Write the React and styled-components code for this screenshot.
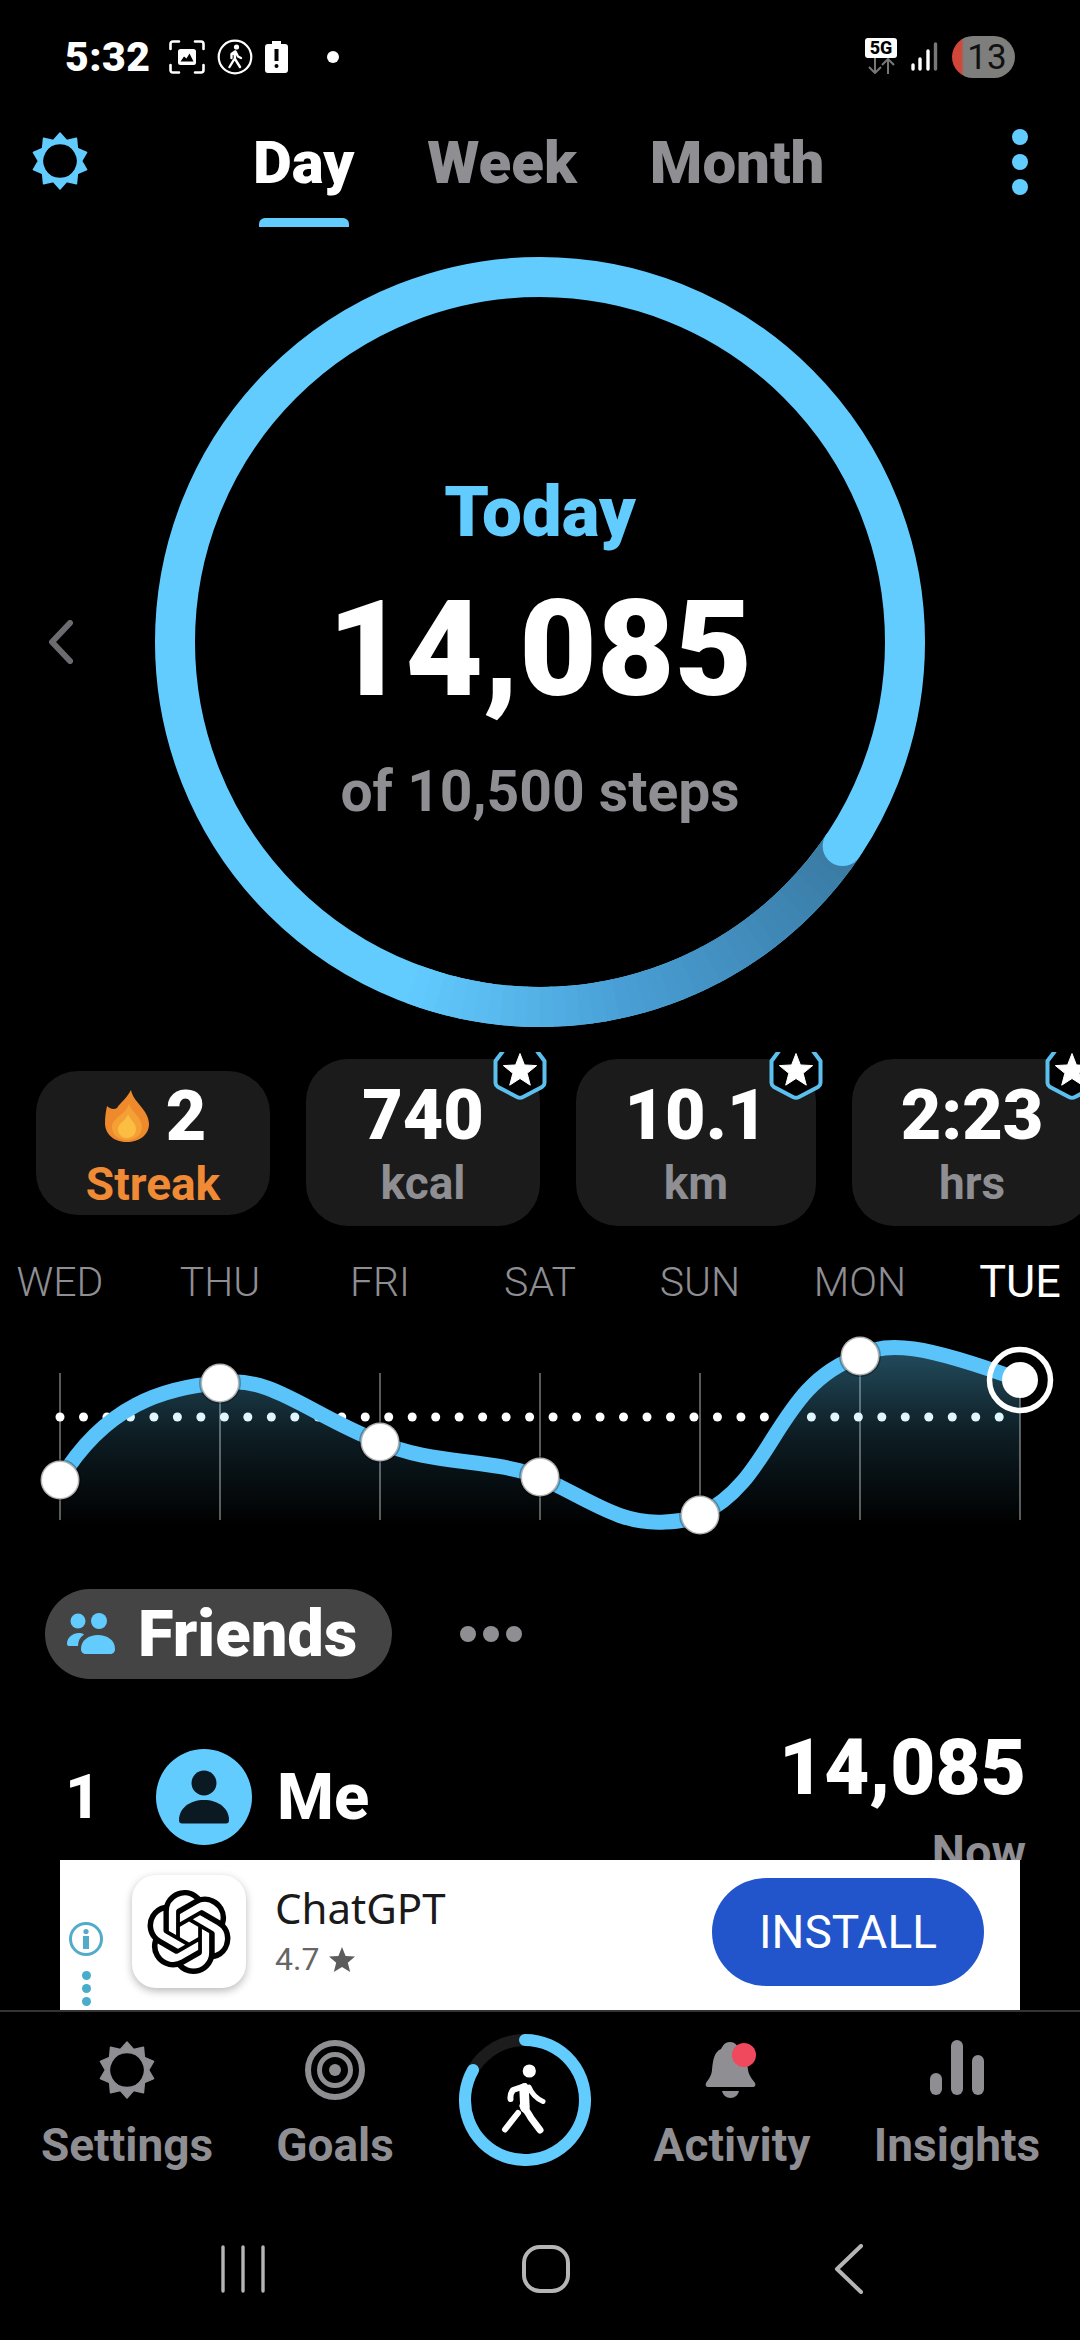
import React from "react";
import styled, { createGlobalStyle } from "styled-components";
import { SiOpenai } from "react-icons/si";

const BLUE = "#63ccff";
const GRAY = "#8e8e93";

const Global = createGlobalStyle`
  html, body { margin: 0; padding: 0; background: #000; }
  body { font-family: Roboto, "Liberation Sans", sans-serif; }
  * { box-sizing: border-box; }
  svg { display: block; }
`;

const Page = styled.div`
  width: 1080px; height: 2340px; background: #000; color: #fff;
  display: flex; flex-direction: column; overflow: hidden;
`;

/* ---- status bar ---- */
const StatusBar = styled.div`
  height: 114px; flex: none; display: flex; align-items: center;
  padding: 0 65px 0 65px;
`;
const Time = styled.div`font-size: 41px; font-weight: 900; width: 104px; letter-spacing: 0.5px;`;
const StatusLeft = styled.div`display: flex; align-items: center; gap: 12px;`;
const StatusDot = styled.div`width: 12px; height: 12px; border-radius: 50%; background: #fff; margin-left: 27px;`;
const StatusRight = styled.div`margin-left: auto; display: flex; align-items: center; gap: 13px;`;
const NetBlock = styled.div`display: flex; flex-direction: column; align-items: center; width: 32px; margin-top: -2px;`;
const FiveG = styled.div`
  width: 32px; height: 20px; background: #fff; color: #000; border-radius: 3px;
  font-size: 18px; font-weight: 800; line-height: 20px; text-align: center;
`;
const BatteryPill = styled.div`
  width: 63px; height: 42px; border-radius: 21px; color: #111; font-size: 35px; font-weight: 400;
  background: linear-gradient(90deg, #d0473a 0, #d0473a 9px, #7e7f7c 12px);
  display: flex; align-items: center; justify-content: center; padding-left: 7px; margin-left: 1px;
`;

/* ---- header ---- */
const Header = styled.div`
  height: 114px; flex: none; display: flex; align-items: flex-start;
  padding-left: 31px;
`;
const GearSlot = styled.div`width: 58px; margin-top: 17px;`;
const Tabs = styled.div`display: flex; margin-left: 164px; gap: 73px;`;
const Tab = styled.div`
  display: flex; flex-direction: column; align-items: center;
  font-size: 60px; font-weight: 900; line-height: 70px; color: ${p => (p.$active ? "#fff" : GRAY)};
  height: 114px; padding-top: 14px;
`;
const TabBar = styled.div`
  width: 90px; height: 9px; border-radius: 6px 6px 0 0; margin-top: 20px;
  background: ${p => (p.$active ? BLUE : "transparent")};
`;
const KebabSlot = styled.div`margin-left: auto; margin-right: 52px; margin-top: 15px; display: flex; flex-direction: column; gap: 9px;`;
const KebabDot = styled.div`width: 16px; height: 16px; border-radius: 50%; background: ${BLUE};`;

/* ---- ring ---- */
const RingRow = styled.div`display: flex; align-items: center; margin-top: 29px; flex: none;`;
const ChevronSlot = styled.div`width: 155px; padding-left: 47px; flex: none;`;
const RingStack = styled.div`display: grid; width: 770px; height: 770px; flex: none;`;
const RingLayer = styled.div`grid-area: 1 / 1;`;
const RingText = styled.div`
  grid-area: 1 / 1; display: flex; flex-direction: column; align-items: center; padding-top: 210px;
`;
const Today = styled.div`font-size: 71px; line-height: 90px; font-weight: 900; color: ${BLUE};`;
const BigCount = styled.div`font-size: 134px; line-height: 150px; font-weight: 900; margin-top: 18px;`;
const Goal = styled.div`font-size: 57px; line-height: 70px; font-weight: 700; color: ${GRAY}; margin-top: 32px;`;

/* ---- stats ---- */
const Stats = styled.div`
  display: flex; align-items: center; gap: 36px; margin-top: 32px; padding-left: 36px; width: 1200px; flex: none;
`;
const StatCard = styled.div`
  position: relative; flex: none; width: ${p => p.$w}px;
  background: #1b1b1b; border-radius: 42px; text-align: center;
  padding: ${p => (p.$streak ? "5px 0 3px" : "16px 0 15px")};
`;
const StatValue = styled.div`
  font-size: 70px; line-height: 80px; font-weight: 900;
  display: flex; align-items: center; justify-content: center; gap: 17px;
  padding-left: ${p => (p.$pad ? 5 : 0)}px;
`;
const StatLabel = styled.div`
  font-size: 46px; line-height: 56px; font-weight: 700; color: ${p => (p.$orange ? "#f08a35" : GRAY)};
`;
const BadgeSlot = styled.div`position: absolute; top: -7px; right: -7px;`;

/* ---- days and chart ---- */
const Days = styled.div`
  display: grid; grid-template-columns: repeat(7, 160px); margin: 32px 0 0 -20px; width: 1120px;
  align-items: end; height: 48px; flex: none;
`;
const Day = styled.div`
  text-align: center; font-size: ${p => (p.$on ? 45 : 41)}px; font-weight: ${p => (p.$on ? 400 : 300)};
  line-height: 48px; color: ${p => (p.$on ? "#fff" : GRAY)};
`;
const ChartWrap = styled.div`margin-top: 4px; height: 230px; flex: none;`;

/* ---- friends ---- */
const FriendsBar = styled.div`display: flex; align-items: center; margin: 49px 0 0 45px; flex: none;`;
const FriendsPill = styled.div`
  width: 347px; height: 90px; border-radius: 45px; background: #444;
  display: flex; align-items: center; padding-left: 22px; gap: 23px;
  font-size: 65px; font-weight: 900;
`;
const MoreDots = styled.div`display: flex; gap: 7px; margin-left: 68px;`;
const MoreDot = styled.div`width: 16px; height: 16px; border-radius: 50%; background: ${GRAY};`;
const FriendClip = styled.div`height: 181px; overflow: hidden; padding: 70px 54px 0 65px; flex: none;`;
const FriendRow = styled.div`display: flex; align-items: flex-start;`;
const Rank = styled.div`width: 91px; font-size: 62px; line-height: 96px; font-weight: 800;`;
const Avatar = styled.div`
  width: 96px; height: 96px; border-radius: 50%; background: ${BLUE}; flex: none;
  display: flex; align-items: center; justify-content: center;
`;
const FriendName = styled.div`font-size: 65px; line-height: 96px; font-weight: 800; margin-left: 25px;`;
const FriendRight = styled.div`margin-left: auto; margin-top: -26px; text-align: right;`;
const FriendSteps = styled.div`font-size: 78px; line-height: 90px; font-weight: 900;`;
const FriendWhen = styled.div`font-size: 47px; line-height: 60px; font-weight: 700; color: ${GRAY}; margin-top: 9px;`;

/* ---- ad ---- */
const Ad = styled.div`
  height: 150px; margin: 0 60px; background: #fff; flex: none; display: flex; padding-top: 15px; color: #222;
`;
const AdInfo = styled.div`width: 72px; flex: none; display: flex; flex-direction: column; align-items: center; padding: 46px 20px 0 0;`;
const AdDots = styled.div`display: flex; flex-direction: column; gap: 4px; margin-top: 14px;`;
const AdDot = styled.div`width: 9px; height: 9px; border-radius: 50%; background: #4aaccb;`;
const AppIcon = styled.div`
  width: 114px; height: 113px; border-radius: 24px; background: #fff; flex: none;
  box-shadow: 0 3px 8px rgba(0,0,0,.28); display: flex; align-items: center; justify-content: center; color: #000;
`;
const AdText = styled.div`margin-left: 29px; display: flex; flex-direction: column; padding-top: 8px;`;
const AdTitle = styled.div`font-family: "Noto Sans", Roboto, sans-serif; font-size: 42px; line-height: 50px; color: #1a1a1a;`;
const AdRating = styled.div`display: flex; align-items: center; gap: 9px; font-size: 32px; line-height: 44px; color: #666; margin-top: 4px;`;
const InstallBtn = styled.div`
  margin: 3px 36px 0 auto; width: 272px; height: 108px; border-radius: 54px; background: #2255cc;
  color: #fff; font-size: 46px; display: flex; align-items: center; justify-content: center;
`;

/* ---- bottom nav ---- */
const Divider = styled.div`height: 2px; background: #333; flex: none;`;
const BottomNav = styled.div`
  display: grid; grid-template-columns: 254px 162px 218px 196px 254px; width: 1084px; height: 178px; flex: none; padding-top: 28px;
`;
const NavItem = styled.div`display: flex; flex-direction: column; align-items: center;`;
const NavIcon = styled.div`height: 60px; display: flex; align-items: center; justify-content: center;`;
const NavLabel = styled.div`font-size: 46px; font-weight: 700; line-height: 52px; margin-top: 19px; color: ${GRAY}; white-space: nowrap;`;
const NavCenter = styled.div`display: flex; justify-content: center; margin-top: -6px;`;

/* ---- system nav ---- */
const SystemNav = styled.div`
  flex: none; display: flex; justify-content: center; align-items: center; gap: 256px; padding: 54px 0 0 12px;
`;

/* ---- drawings ---- */
const starPoints = (cx, cy, spikes, ro, ri) => {
  const pts = [];
  for (let i = 0; i < spikes * 2; i++) {
    const a = (i * Math.PI) / spikes - Math.PI / 2;
    const r = i % 2 === 0 ? ro : ri;
    pts.push(`${(cx + r * Math.cos(a)).toFixed(2)} ${(cy + r * Math.sin(a)).toFixed(2)}`);
  }
  return "M" + pts.join("L") + "Z";
};

const Gear = ({ color }) => (
  <svg width="58" height="60" viewBox="0 0 58 60">
    <path
      d={starPoints(29, 30, 10, 28, 21.5) + " M29 12.5a17.5 17.5 0 1 0 .01 0Z"}
      fill={color} fillRule="evenodd" stroke={color} strokeWidth="1.5" strokeLinejoin="round"
    />
  </svg>
);

const Walker = ({ width, height, color = "#fff" }) => (
  <svg width={width} height={height} viewBox="58 40 50 76" fill="none" stroke={color} strokeLinecap="round" strokeLinejoin="round">
    <circle cx="88.3" cy="49" r="6.6" fill={color} stroke="none" />
    <path d="M84 64 L72 68 Q69 72 69.5 77" strokeWidth="6" />
    <path d="M88 65 Q92 75 102 79.5" strokeWidth="5" />
    <path d="M83 66 L84 86" strokeWidth="9.5" />
    <path d="M82 84 Q88 92 90 96 L99 108" strokeWidth="7" />
    <path d="M77 91 L64 107.5" strokeWidth="6" />
  </svg>
);

const lerp = (a, b, t) => a.map((v, i) => Math.round(v + (b[i] - v) * t));
const tailColor = deg => {
  const c1 = [58, 122, 163], c2 = [72, 158, 212], c3 = [99, 204, 255];
  if (deg < 75) return lerp(c1, c2, (deg - 34) / 41);
  return lerp(c2, c3, Math.min(1, (deg - 75) / 35));
};

const MainRing = () => {
  const r = 365, c = 385;
  const pt = d => [c + r * Math.cos((d * Math.PI) / 180), c + r * Math.sin((d * Math.PI) / 180)];
  const segs = [];
  for (let d = 34; d < 110; d += 2) {
    const [x1, y1] = pt(d);
    const [x2, y2] = pt(d + 2.3);
    const col = tailColor(d);
    segs.push(<path key={d} d={`M${x1} ${y1}A${r} ${r} 0 0 1 ${x2} ${y2}`} stroke={`rgb(${col.join(",")})`} strokeWidth="40" fill="none" />);
  }
  const [hx, hy] = pt(34);
  return (
    <svg width="770" height="770" viewBox="0 0 770 770">
      <circle cx={c} cy={c} r={r} fill="none" stroke={BLUE} strokeWidth="40" />
      {segs}
      <circle cx={hx} cy={hy} r="20" fill={BLUE} />
    </svg>
  );
};

const Chevron = () => (
  <svg width="26" height="44" viewBox="0 0 26 44" fill="none">
    <path d="M23 3 L5 22 L23 41" stroke="#6b6b70" strokeWidth="6" strokeLinecap="round" strokeLinejoin="round" />
  </svg>
);

const Flame = () => (
  <svg width="44" height="52" viewBox="0 0 44 52">
    <path d="M26 0C28 12 44 20 44 34C44 45 34 52 22 52C10 52 0 45 0 33C0 26 1 21 2 16C5 19 9 20 12 18C15 13 22 8 26 0Z" fill="#ee8a2c" />
    <path d="M24 14C27 23 37 27 37 37C37 45 30 50 22 50C14 50 7 45 7 37C7 28 20 25 24 14Z" fill="#f4a034" />
    <path d="M23 24C25 30 31 33 31 39C31 44 27 48 22 48C17 48 13 44 13 39C13 33 21 31 23 24Z" fill="#fbbe42" />
  </svg>
);

const StarBadge = () => (
  <svg width="54" height="48" viewBox="0 0 54 48">
    <path d="M10 -1 L2.5 9 V31 Q2.5 33 5 35 L24 45 Q27 46.5 30 45 L49 35 Q51.5 33 51.5 31 V9 L44 -1" fill="#000" stroke="#5cc0ee" strokeWidth="4" strokeLinejoin="round" />
    <path d={starPoints(27, 19, 5, 17.5, 7.5)} fill="#fff" stroke="#fff" strokeWidth="1" strokeLinejoin="round" />
  </svg>
);

const Chart = () => {
  const xs = [60, 220, 380, 540, 700, 860, 1020];
  const ys = [1480, 1383, 1442, 1477, 1515, 1356, 1380];
  const curve =
    "M60 1480C105 1405 165 1387 220 1383C270 1374 310 1415 380 1442C430 1465 490 1458 540 1477C590 1500 620 1525 665 1522C680 1521 690 1520 700 1515C775 1480 775 1385 860 1356C885 1340 925 1345 1020 1380";
  const dots = Array.from({ length: 41 }, (_, i) => 60 + i * 23.48);
  return (
    <svg width="1080" height="230" viewBox="0 1310 1080 230">
      <defs>
        <linearGradient id="area" gradientUnits="userSpaceOnUse" x1="0" y1="1345" x2="0" y2="1525">
          <stop offset="0" stopColor="#5fd0ff" stopOpacity="0.38" />
          <stop offset="0.5" stopColor="#5fd0ff" stopOpacity="0.14" />
          <stop offset="1" stopColor="#5fd0ff" stopOpacity="0" />
        </linearGradient>
      </defs>
      {xs.map((x, i) => (
        <line key={x} x1={x} x2={x} y1={i === 1 || i === 5 || i === 6 ? ys[i] : 1373} y2="1520" stroke="#5a5a5a" strokeWidth="2" />
      ))}
      {dots.map(x => <circle key={x} cx={x} cy="1417" r="4.5" fill="#fff" />)}
      <path d={curve + "L1020 1530L60 1530Z"} fill="url(#area)" />
      <path d={curve} fill="none" stroke="#5ac4fa" strokeWidth="15" strokeLinecap="round" />
      {xs.slice(0, 6).map((x, i) => (
        <circle key={x} cx={x} cy={ys[i]} r="19.5" fill="#fff" stroke="#000" strokeOpacity="0.3" strokeWidth="3" />
      ))}
      <circle cx="1020" cy="1380" r="30.5" fill="none" stroke="#fff" strokeWidth="5.5" />
      <circle cx="1020" cy="1380" r="18" fill="#fff" />
    </svg>
  );
};

const FriendsIcon = () => (
  <svg width="48" height="42" viewBox="0 0 48 42" fill={BLUE}>
    <circle cx="11" cy="8" r="7.5" />
    <circle cx="32" cy="8" r="8" />
    <path d="M0 31C0 24 6 20 12 20C14 20 16 20.5 17 21.5C13 24 11 28 11 33H3C1 33 0 32.5 0 31Z" />
    <path d="M14 36C14 27 22 22 31 22C40 22 48 27 48 36C48 39.5 46 41 43 41H19C16 41 14 39.5 14 36Z" />
  </svg>
);

const PersonIcon = () => (
  <svg width="52" height="54" viewBox="0 0 52 54" fill="#0b1a22">
    <circle cx="26" cy="13" r="12.5" />
    <path d="M1 50C1 38 12 30 26 30C40 30 51 38 51 50C51 52.5 50 53.5 48 53.5H4C2 53.5 1 52.5 1 50Z" />
  </svg>
);

const InfoIcon = () => (
  <svg width="36" height="36" viewBox="0 0 36 36" fill="none">
    <circle cx="18" cy="18" r="15.5" stroke="#52acc9" strokeWidth="3" />
    <circle cx="18" cy="10.5" r="2.6" fill="#52acc9" />
    <rect x="15" y="15" width="6" height="13" fill="#52acc9" />
  </svg>
);

const SmallStar = () => (
  <svg width="28" height="27" viewBox="0 0 28 27">
    <path d="M14 1 L17.6 10 L27 10.6 L19.8 16.8 L22.2 26 L14 21 L5.8 26 L8.2 16.8 L1 10.6 L10.4 10 Z" fill="#5c5c5c" />
  </svg>
);

const ScreenshotIcon = () => (
  <svg width="36" height="34" viewBox="0 0 36 34" fill="none">
    <path d="M1.5 9V4Q1.5 1.5 4 1.5H10M26 1.5H32Q34.5 1.5 34.5 4V9M34.5 25V30Q34.5 32.5 32 32.5H26M10 32.5H4Q1.5 32.5 1.5 30V25" stroke="#fff" strokeWidth="2.6" strokeLinecap="round" />
    <rect x="9" y="9" width="18" height="16" rx="2.5" fill="#fff" />
    <path d="M11.5 21.5L15 16.5L17.5 18.5L20.5 13.5L24.5 21.5Z" fill="#000" />
  </svg>
);

const WalkStatus = () => (
  <svg width="36" height="36" viewBox="0 0 36 36" fill="none">
    <circle cx="18" cy="18" r="16.3" stroke="#fff" strokeWidth="2.2" />
    <circle cx="19.5" cy="8" r="2.6" fill="#fff" />
    <path d="M18 12.5L14.5 15V19M18.5 12.5L21 17.5L24 19M17.5 13L18 20L23 28M17 20.5L12.5 28" stroke="#fff" strokeWidth="2.4" strokeLinecap="round" strokeLinejoin="round" />
  </svg>
);

const BatteryIcon = () => (
  <svg width="23" height="32" viewBox="0 0 23 32">
    <path d="M7 0H16V3H20Q23 3 23 6V29Q23 32 20 32H3Q0 32 0 29V6Q0 3 3 3H7Z" fill="#fff" />
    <rect x="9.5" y="8" width="4" height="12" fill="#000" />
    <rect x="9.5" y="23" width="4" height="4" rx="2" fill="#000" />
  </svg>
);

const NetArrows = () => (
  <svg width="30" height="16" viewBox="0 0 30 16" fill="none" stroke="#777" strokeWidth="2">
    <path d="M9 0V15M3 9L9 15L15 9" />
    <path d="M22 16V1M16 7L22 1L28 7" />
  </svg>
);

const SignalIcon = () => (
  <svg width="28" height="30" viewBox="0 0 28 30" fill="none" strokeWidth="3.4" strokeLinecap="round">
    <path d="M3 27V23" stroke="#fff" />
    <path d="M10 27V17" stroke="#fff" />
    <path d="M18 27V9" stroke="#fff" />
    <path d="M25.5 27V2" stroke="#777" />
  </svg>
);

const GoalsIcon = () => (
  <svg width="60" height="60" viewBox="0 0 60 60" fill="none" stroke={GRAY}>
    <circle cx="30" cy="30" r="27" strokeWidth="6" />
    <circle cx="30" cy="30" r="15.5" strokeWidth="5" />
    <circle cx="30" cy="30" r="6" fill={GRAY} stroke="none" />
  </svg>
);

const NavRingBox = styled.div`
  display: grid; width: 132px; height: 132px; align-items: center; justify-items: center;
  & > * { grid-area: 1 / 1; }
`;
const NavWalkerSlot = styled.div`padding-right: 3px;`;

const NavRing = () => {
  const r = 60, c = 66;
  const pt = d => {
    const a = ((d - 90) * Math.PI) / 180;
    return `${c + r * Math.cos(a)} ${c + r * Math.sin(a)}`;
  };
  return (
    <NavRingBox>
      <svg width="132" height="132" viewBox="0 0 132 132" fill="none">
        <circle cx={c} cy={c} r={r} stroke="#1c1c1c" strokeWidth="12" />
        <path d={`M${pt(0)}A${r} ${r} 0 1 1 ${pt(300)}`} stroke={BLUE} strokeWidth="12" strokeLinecap="round" />
      </svg>
      <NavWalkerSlot><Walker width={50} height={76} /></NavWalkerSlot>
    </NavRingBox>
  );
};

const BellIcon = () => (
  <svg width="54" height="60" viewBox="0 0 54 60">
    <path d="M25 2C19 2 18 6 16 9C9 12 8 20 7 30C6.5 36 3 40 1 43C0 45 1 47 3 47H48C50 47 51 45 50 43C48 40 44 36 43 30C42 20 41 12 34 9C32 6 31 2 25 2Z" fill={GRAY} />
    <path d="M17 51H34C33 55 30 58 25.5 58C21 58 18 55 17 51Z" fill={GRAY} />
    <circle cx="39" cy="15" r="12" fill="#f0485c" />
  </svg>
);

const InsightsIcon = () => (
  <svg width="54" height="60" viewBox="0 0 54 60">
    <rect x="0" y="33" width="12" height="22" rx="6" fill={GRAY} />
    <rect x="21" y="0" width="12" height="55" rx="6" fill={GRAY} />
    <rect x="42" y="15" width="12" height="40" rx="6" fill={GRAY} />
  </svg>
);

const Recents = () => (
  <svg width="46" height="48" viewBox="0 0 46 48" stroke="#b5b5b5" strokeWidth="3.4" strokeLinecap="round">
    <path d="M3 2V46M23 2V46M43 2V46" />
  </svg>
);
const Home = () => (
  <svg width="48" height="48" viewBox="0 0 48 48" fill="none" stroke="#b5b5b5" strokeWidth="4">
    <rect x="2" y="2" width="44" height="44" rx="16" />
  </svg>
);
const Back = () => (
  <svg width="46" height="50" viewBox="-8 0 46 50" fill="none" stroke="#b5b5b5" strokeWidth="4" strokeLinecap="round" strokeLinejoin="round">
    <path d="M27 2 L3 25 L27 48" />
  </svg>
);

export default function App() {
  return (
    <Page>
      <Global />
      <StatusBar>
        <Time>5:32</Time>
        <StatusLeft>
          <ScreenshotIcon />
          <WalkStatus />
          <BatteryIcon />
          <StatusDot />
        </StatusLeft>
        <StatusRight>
          <NetBlock>
            <FiveG>5G</FiveG>
            <NetArrows />
          </NetBlock>
          <SignalIcon />
          <BatteryPill>13</BatteryPill>
        </StatusRight>
      </StatusBar>

      <Header>
        <GearSlot><Gear color={BLUE} /></GearSlot>
        <Tabs>
          <Tab $active>Day<TabBar $active /></Tab>
          <Tab>Week<TabBar /></Tab>
          <Tab>Month<TabBar /></Tab>
        </Tabs>
        <KebabSlot>
          <KebabDot /><KebabDot /><KebabDot />
        </KebabSlot>
      </Header>

      <RingRow>
        <ChevronSlot><Chevron /></ChevronSlot>
        <RingStack>
          <RingLayer><MainRing /></RingLayer>
          <RingText>
            <Today>Today</Today>
            <BigCount>14,085</BigCount>
            <Goal>of 10,500 steps</Goal>
          </RingText>
        </RingStack>
      </RingRow>

      <Stats>
        <StatCard $w={234} $streak>
          <StatValue $pad><Flame />2</StatValue>
          <StatLabel $orange>Streak</StatLabel>
        </StatCard>
        <StatCard $w={234}>
          <StatValue>740</StatValue>
          <StatLabel>kcal</StatLabel>
          <BadgeSlot><StarBadge /></BadgeSlot>
        </StatCard>
        <StatCard $w={240}>
          <StatValue>10.1</StatValue>
          <StatLabel>km</StatLabel>
          <BadgeSlot><StarBadge /></BadgeSlot>
        </StatCard>
        <StatCard $w={240}>
          <StatValue>2:23</StatValue>
          <StatLabel>hrs</StatLabel>
          <BadgeSlot><StarBadge /></BadgeSlot>
        </StatCard>
      </Stats>

      <Days>
        {["WED", "THU", "FRI", "SAT", "SUN", "MON"].map(d => <Day key={d}>{d}</Day>)}
        <Day $on>TUE</Day>
      </Days>
      <ChartWrap><Chart /></ChartWrap>

      <FriendsBar>
        <FriendsPill><FriendsIcon />Friends</FriendsPill>
        <MoreDots><MoreDot /><MoreDot /><MoreDot /></MoreDots>
      </FriendsBar>

      <FriendClip>
        <FriendRow>
          <Rank>1</Rank>
          <Avatar><PersonIcon /></Avatar>
          <FriendName>Me</FriendName>
          <FriendRight>
            <FriendSteps>14,085</FriendSteps>
            <FriendWhen>Now</FriendWhen>
          </FriendRight>
        </FriendRow>
      </FriendClip>

      <Ad>
        <AdInfo>
          <InfoIcon />
          <AdDots><AdDot /><AdDot /><AdDot /></AdDots>
        </AdInfo>
        <AppIcon><SiOpenai size={84} /></AppIcon>
        <AdText>
          <AdTitle>ChatGPT</AdTitle>
          <AdRating>4.7 <SmallStar /></AdRating>
        </AdText>
        <InstallBtn>INSTALL</InstallBtn>
      </Ad>
      <Divider />

      <BottomNav>
        <NavItem><NavIcon><Gear color={GRAY} /></NavIcon><NavLabel>Settings</NavLabel></NavItem>
        <NavItem><NavIcon><GoalsIcon /></NavIcon><NavLabel>Goals</NavLabel></NavItem>
        <NavCenter><NavRing /></NavCenter>
        <NavItem><NavIcon><BellIcon /></NavIcon><NavLabel>Activity</NavLabel></NavItem>
        <NavItem><NavIcon><InsightsIcon /></NavIcon><NavLabel>Insights</NavLabel></NavItem>
      </BottomNav>

      <SystemNav>
        <Recents />
        <Home />
        <Back />
      </SystemNav>
    </Page>
  );
}
